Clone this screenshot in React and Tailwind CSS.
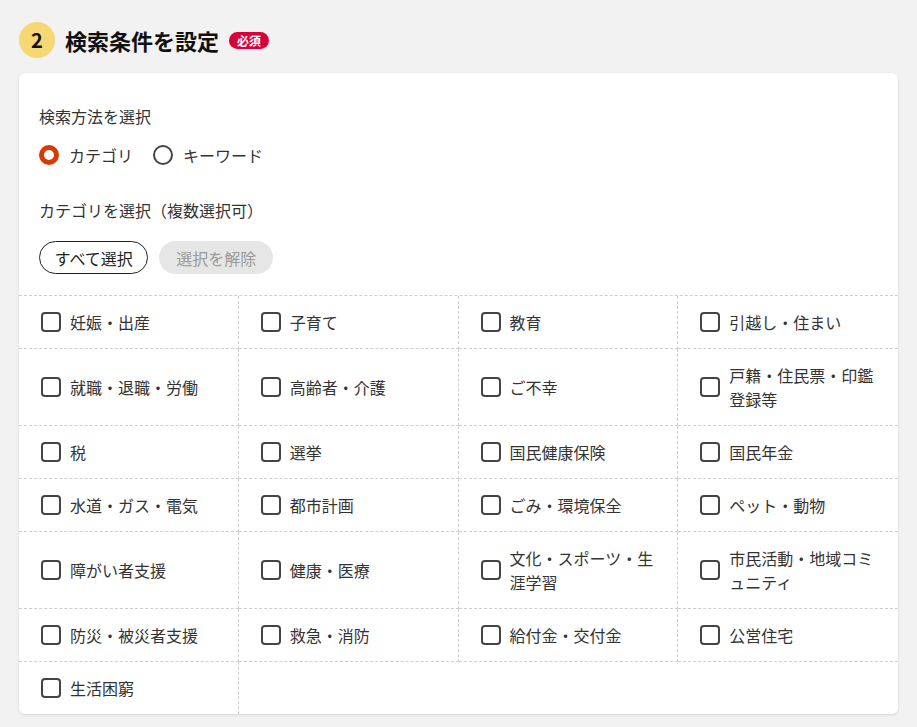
import { useState } from "react";

const categories = [
  "妊娠・出産",
  "子育て",
  "教育",
  "引越し・住まい",
  "就職・退職・労働",
  "高齢者・介護",
  "ご不幸",
  "戸籍・住民票・印鑑登録等",
  "税",
  "選挙",
  "国民健康保険",
  "国民年金",
  "水道・ガス・電気",
  "都市計画",
  "ごみ・環境保全",
  "ペット・動物",
  "障がい者支援",
  "健康・医療",
  "文化・スポーツ・生涯学習",
  "市民活動・地域コミュニティ",
  "防災・被災者支援",
  "救急・消防",
  "給付金・交付金",
  "公営住宅",
  "生活困窮",
];

const Radio = ({ checked, label, onClick }) => (
  <button type="button" onClick={onClick} className="flex items-center gap-[10px]">
    <span
      className={
        checked
          ? "w-5 h-5 rounded-full border-[5px] border-[#d83b01] bg-white"
          : "w-5 h-5 rounded-full border-2 border-[#444]"
      }
    ></span>
    <span className="text-base leading-6 text-[#333]">{label}</span>
  </button>
);

export default function App() {
  const [mode, setMode] = useState("category");
  const [selected, setSelected] = useState([]);

  const toggle = (name) => {
    setSelected((s) => (s.includes(name) ? s.filter((x) => x !== name) : [...s, name]));
  };

  // last row only has one item, so it gets no bottom border
  const lastRowStart = Math.floor((categories.length - 1) / 4) * 4;

  return (
    <div
      className="min-h-screen bg-[#f2f2f2] px-[19px] pt-[22px] pb-6"
      style={{ fontFamily: '"Noto Sans CJK JP", "Noto Sans", sans-serif' }}
    >
      {/* section header */}
      <div className="flex items-center">
        <div className="w-9 h-9 rounded-full bg-[#f7d774] flex items-center justify-center text-[20px] font-bold text-[#111]">
          2
        </div>
        <h2 className="ml-[10px] text-[22px] font-bold text-[#111] leading-8">検索条件を設定</h2>
        <span className="ml-[10px] px-[8px] h-[17px] rounded-full bg-[#d6003a] text-white text-[12px] font-bold leading-[17px]">
          必須
        </span>
      </div>

      {/* card */}
      <div className="mt-[15px] bg-white rounded-md shadow-[0_1px_3px_rgba(0,0,0,0.12)] overflow-hidden">
        <div className="px-5 pt-[31px]">
          <p className="text-base leading-6 text-[#333]">検索方法を選択</p>
          <div className="mt-[15px] flex items-center gap-5">
            <Radio checked={mode === "category"} label="カテゴリ" onClick={() => setMode("category")} />
            <Radio checked={mode === "keyword"} label="キーワード" onClick={() => setMode("keyword")} />
          </div>
          <p className="mt-[31px] text-base leading-6 text-[#333]">カテゴリを選択（複数選択可）</p>
          <div className="mt-[19px] flex gap-[11px]">
            <button
              type="button"
              onClick={() => setSelected(categories)}
              className="h-[33px] px-[14.5px] rounded-full border-[1.5px] border-[#222] text-base text-[#222]"
            >
              すべて選択
            </button>
            <button
              type="button"
              onClick={() => setSelected([])}
              className="h-[33px] px-[17px] rounded-full bg-[#e6e6e6] text-base text-[#9a9a9a]"
            >
              選択を解除
            </button>
          </div>
        </div>

        <div className="mt-[21px] grid grid-cols-4 border-t border-dashed border-[#cfcfcf]">
          {categories.map((name, i) => (
            <div
              key={name}
              className={
                "flex items-center gap-[9px] pl-[22px] pr-[22px] py-[14px] border-dashed border-[#cfcfcf] " +
                (i % 4 === 3 ? "" : "border-r ") +
                (i >= lastRowStart ? "" : "border-b")
              }
            >
              <button
                type="button"
                onClick={() => toggle(name)}
                className={
                  selected.includes(name)
                    ? "shrink-0 w-5 h-5 rounded-[4px] border-2 border-[#444] bg-[#444]"
                    : "shrink-0 w-5 h-5 rounded-[4px] border-2 border-[#444] bg-white"
                }
              ></button>
              <span className="text-base leading-6 text-[#333]">{name}</span>
            </div>
          ))}
        </div>
      </div>
    </div>
  );
}
